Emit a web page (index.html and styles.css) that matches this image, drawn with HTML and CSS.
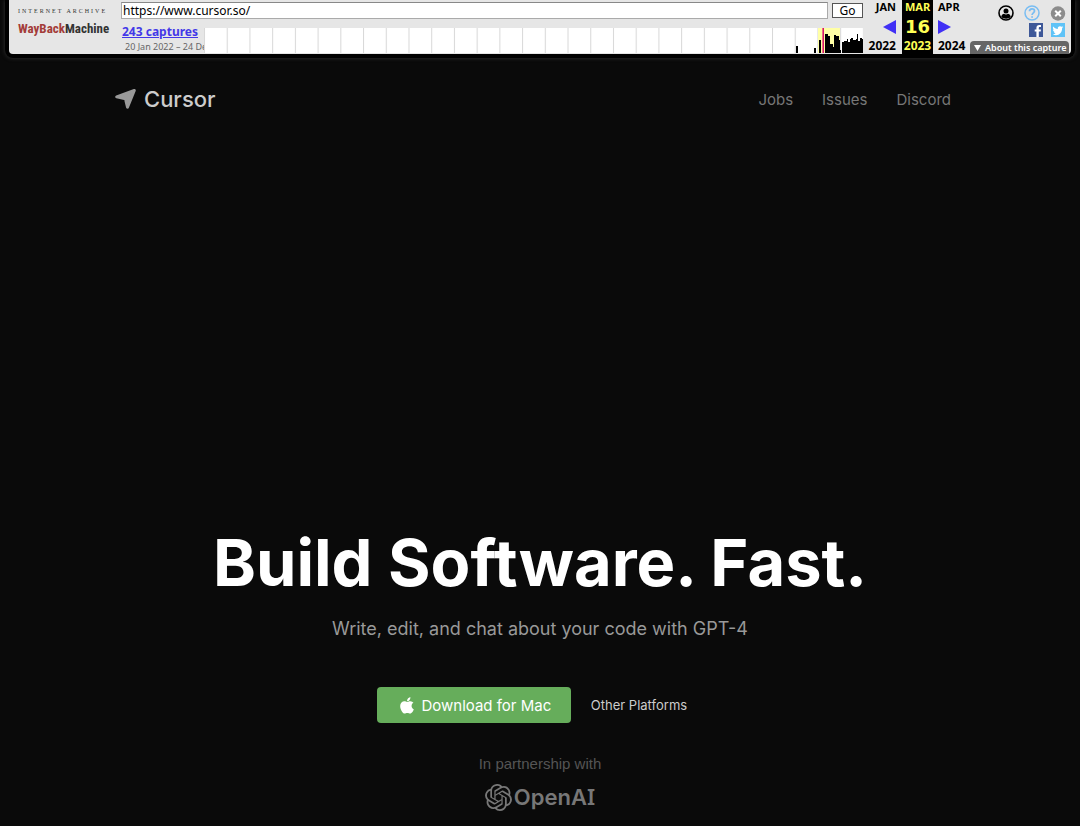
FILE: index.html
```html
<!DOCTYPE html>
<html lang="en">
<head>
<meta charset="utf-8">
<title>Cursor - Build Software. Fast.</title>
<link rel="stylesheet" href="styles.css">
</head>
<body>
<div class="archive-bar">
  <a class="archive-logo" href="#">
    <span class="archive-name">INTERNET ARCHIVE</span>
    <span class="wayback"><span class="wayback-red">WayBack</span>Machine</span>
  </a>
  <div class="archive-main">
    <form class="url-form">
      <input class="url-input" type="text" aria-label="Address" value="https://www.cursor.so/">
      <button class="go" type="button">Go</button>
    </form>
    <div class="history">
      <div class="captures">
        <a class="captures-link" href="#">243 captures</a>
        <span class="captures-range">20 Jan 2022 – 24 Dec 2024</span>
      </div>
      <svg class="spark" viewBox="0 0 659 25" preserveAspectRatio="none" aria-hidden="true">
        <defs>
          <pattern id="years" width="22.72" height="25" patternUnits="userSpaceOnUse">
            <path fill="#fff" d="M0 0h22.72v25H0z"/><path fill="#d8d8d8" d="M0 0h1v25H0z"/>
          </pattern>
        </defs>
        <path fill="url(#years)" d="M0 0h659v25H0z"/>
        <path fill="#ffffa5" d="M614 0h22v25h-22z"/>
        <path d="M592 18h2v7h-2zM610 20h2v5h-2zM615 12h2v13h-2zM621 25V6h3v2h2v8h3v3h1V7h2v1h3v4h1v10h1v3zM638 25V14h2v-1h3v-2h1v3h2v-3h1v-1h2v2h3v-1h1V6h1v7h2v-3h2v1h2v14z"/>
        <path fill="#d6176b" d="M619 0h1v25h-1z"/><path fill="#f06d87" d="M618 0h1v25h-1z"/>
      </svg>
    </div>
  </div>
  <div class="dates">
    <div class="date date-prev"><span>JAN</span><button class="arrow" type="button" aria-label="Previous capture"><svg width="13" height="14" viewBox="0 0 13 14"><path d="M0 7 13 0v14z"/></svg></button><span class="year">2022</span></div>
    <div class="date date-now"><span>MAR</span><strong class="day">16</strong><span class="year">2023</span></div>
    <div class="date date-next"><span>APR</span><button class="arrow" type="button" aria-label="Next capture"><svg width="13" height="14" viewBox="0 0 13 14"><path d="M13 7 0 0v14z"/></svg></button><span class="year">2024</span></div>
  </div>
  <div class="tools">
    <div class="tool-row">
      <button class="tool" type="button" aria-label="Account"><svg width="16" height="16" viewBox="0 0 16 16"><circle cx="8" cy="8" r="7" fill="none" stroke="#000" stroke-width="1.6"/><circle cx="8" cy="6" r="2.5"/><path d="M3.2 12c.4-2.3 1.8-3.2 2.9-3.2 1 .9 2.8.9 3.8 0 1.1 0 2.5.9 2.9 3.2C10.6 14.300 5.600 14.300 3.200 12z"/></svg></button>
      <button class="tool" type="button" aria-label="Help"><svg width="16" height="16" viewBox="0 0 16 16" fill="none" stroke="#79bdf2" stroke-width="1.5"><circle cx="8" cy="8" r="7"/><path d="M5.500 6.300c0-3.300 5-3.300 5-.3 0 1.800-2.400 1.900-2.400 4M8.100 11.300v1.500" stroke-width="1.8"/></svg></button>
      <button class="tool" type="button" aria-label="Close"><svg width="16" height="16" viewBox="0 0 16 16"><circle cx="8" cy="8.5" r="7.2" fill="#8c8c8c"/><path d="m5.200 5.700 5.600 5.600m0-5.600-5.600 5.600" stroke="#fff" stroke-width="2"/></svg></button>
    </div>
    <div class="tool-row social">
      <a class="tool" href="#" aria-label="Facebook"><svg width="14" height="14" viewBox="0 0 14 14"><path fill="#3e5898" d="M0 0h14v14H0z"/><path fill="#fff" d="M7.400 14V8.500H5.700V6.400h1.700V5c0-2 1.100-3 2.800-3H12v2h-1.200c-.8 0-1 .4-1 1.100v1.300H12l-.3 2.100H9.800V14z"/></svg></a>
      <a class="tool" href="#" aria-label="Twitter"><svg width="14" height="14" viewBox="0 0 14 14"><path fill="#5fc3f7" d="M0 0h14v14H0z"/><path fill="#fff" d="M12.300 4.100l-1.200.4.9-1.200-1.400.5A2.300 2.300 0 0 0 6.800 6C4.900 5.900 3.300 5 2.200 3.600c-.6 1.100-.3 2.300.7 3.100l-1-.3c0 1.200.8 2 1.800 2.300H2.700c.3.900 1.100 1.500 2.100 1.600-.9.700-2 1-3.200.9 4.600 2.700 9.600-.4 9.500-5.900z"/></svg></a>
    </div>
    <button class="about" type="button"><svg width="7" height="6" viewBox="0 0 7 6"><path fill="#fff" d="M0 0h7L3.500 6z"/></svg>About this capture</button>
  </div>
</div>

<header class="site-header">
  <a class="brand" href="#">
    <svg width="22" height="20" viewBox="0 0 22 20" aria-hidden="true"><path d="M1.700 7.800 19.300 1.500 12.500 18.200 10.500 9.800z" fill="#999" stroke="#999" stroke-width="3" stroke-linejoin="round"/></svg>
    <span>Cursor</span>
  </a>
  <nav class="nav"><a href="#">Jobs</a><a href="#">Issues</a><a href="#">Discord</a></nav>
</header>

<main class="hero">
  <h1 class="title">Build Software. Fast.</h1>
  <p class="subtitle">Write, edit, and chat about your code with GPT-4</p>
  <div class="actions">
    <button class="download" type="button"><svg width="14" height="17" viewBox="0 0 384 468" aria-hidden="true"><path fill="#fff" d="M318.700 244.700c-.2-36.700 16.400-64.400 50-84.800-18.800-26.900-47.200-41.700-84.700-44.600-35.500-2.800-74.300 20.700-88.500 20.700-15 0-49.400-19.700-76.400-19.700C63.300 117.200 4 160.800 4 249.500c0 26.200 4.800 53.300 14.400 81.200 12.800 36.700 59 126.700 107.200 125.200 25.200-.6 43-17.900 75.800-17.900 31.800 0 48.300 17.900 76.400 17.900 48.600-.7 90.400-82.500 102.600-119.300-65.200-30.700-61.700-90-61.700-91.900zM262.100 80.500c27.300-32.400 24.800-61.900 24-72.500-24.100 1.400-52 16.400-67.900 34.900-17.500 19.800-27.800 44.300-25.600 71.900 26.100 2 49.900-11.400 69.500-34.300z"/></svg>Download for Mac</button>
    <a class="platforms" href="#">Other Platforms</a>
  </div>
  <p class="partner">In partnership with</p>
  <div class="openai">
    <svg width="27" height="27" viewBox="0 0 24 24" aria-hidden="true"><path d="M22.2819 9.8211a5.9847 5.9847 0 0 0-.5157-4.9108 6.0462 6.0462 0 0 0-6.5098-2.9A6.0651 6.0651 0 0 0 4.9807 4.1818a5.9847 5.9847 0 0 0-3.9977 2.9 6.0462 6.0462 0 0 0 .7427 7.0966 5.98 5.98 0 0 0 .511 4.9107 6.051 6.051 0 0 0 6.5146 2.9001A5.9847 5.9847 0 0 0 13.2599 24a6.0557 6.0557 0 0 0 5.7718-4.2058 5.9894 5.9894 0 0 0 3.9977-2.9001 6.0557 6.0557 0 0 0-.7475-7.0729zm-9.022 12.6081a4.4755 4.4755 0 0 1-2.8764-1.0408l.1419-.0804 4.7783-2.7582a.7948.7948 0 0 0 .3927-.6813v-6.7369l2.02 1.1686a.071.071 0 0 1 .038.052v5.5826a4.504 4.504 0 0 1-4.4945 4.4944zm-9.6607-4.1254a4.4708 4.4708 0 0 1-.5346-3.0137l.142.0852 4.783 2.7582a.7712.7712 0 0 0 .7806 0l5.8428-3.3685v2.3324a.0804.0804 0 0 1-.0332.0615L9.74 19.9502a4.4992 4.4992 0 0 1-6.1408-1.6464zM2.3408 7.8956a4.485 4.485 0 0 1 2.3655-1.9728V11.6a.7664.7664 0 0 0 .3879.6765l5.8144 3.3543-2.0201 1.1685a.0757.0757 0 0 1-.071 0l-4.8303-2.7865A4.504 4.504 0 0 1 2.3408 7.872zm16.5963 3.8558L13.1038 8.364 15.1192 7.2a.0757.0757 0 0 1 .071 0l4.8303 2.7913a4.4944 4.4944 0 0 1-.6765 8.1042v-5.6772a.79.79 0 0 0-.407-.667zm2.0107-3.0231l-.142-.0852-4.7735-2.7818a.7759.7759 0 0 0-.7854 0L9.409 9.2297V6.8974a.0662.0662 0 0 1 .0284-.0615l4.8303-2.7866a4.4992 4.4992 0 0 1 6.6802 4.66zM8.3065 12.863l-2.02-1.1638a.0804.0804 0 0 1-.038-.0567V6.0742a4.4992 4.4992 0 0 1 7.3757-3.4537l-.142.0805L8.704 5.459a.7948.7948 0 0 0-.3927.6813zm1.0976-2.3654l2.602-1.4998 2.6069 1.4998v2.9994l-2.5974 1.4997-2.6067-1.4997Z"/></svg>
    <span>OpenA<span class="serif-i">I</span></span>
  </div>
</main>
</body>
</html>
```
FILE: styles.css
```css
* { box-sizing: border-box; }
body { margin: 0; min-height: 100vh; background: #0a0a0a; font-family: Inter, sans-serif; overflow: hidden; }
a { color: inherit; text-decoration: none; }
button { padding: 0; border: 0; background: none; font: inherit; color: inherit; cursor: pointer; }
svg { display: block; flex: none; }

.archive-bar {
  display: flex; height: 58px; margin: 0 5px; padding-left: 8px;
  border: 4px solid #000; border-top: 0; border-radius: 0 0 8px 8px;
  background: #e6e6e6; box-shadow: 0 0 4px #333;
  font-family: "Noto Sans", "Open Sans", sans-serif; font-size: 11px; color: #000;
}
.archive-logo { display: flex; flex-direction: column; width: 104px; padding: 6px 0 0 1px; white-space: nowrap; }
.archive-name { font: 6px/10px "Liberation Serif", serif; letter-spacing: 2px; color: #333; }
.wayback { font: bold 13px/26px "Liberation Sans Narrow", "Roboto Condensed", "DejaVu Sans Condensed", sans-serif; color: #333; }
.wayback-red { color: #a33c39; }
.archive-main { flex: 1; min-width: 0; }
.url-form { display: flex; align-items: center; gap: 4px; height: 20px; }
.url-input {
  flex: 1; min-width: 0; height: 17px; padding: 0 1px; border: 1px solid #aaa; border-top-color: #888;
  background: #fff; font: 12px/14px "Noto Sans", sans-serif; color: #000;
}
.go { width: 31px; height: 15px; border: 1px solid #555; background: #fff; font-size: 12px; line-height: 13px; }
.history { display: flex; height: 34px; padding-top: 8px; }
.captures { width: 83px; overflow: hidden; white-space: nowrap; display: flex; flex-direction: column; margin-top: -4px; padding-left: 1px; }
.captures-link { font-size: 12px; line-height: 16px; font-weight: 700; color: #4338e8; text-decoration: underline; }
.captures-range { padding-left: 3px; font-size: 9px; line-height: 13px; color: #666; }
.spark { flex: 1; min-width: 0; height: 25px; }

.dates { display: flex; margin-left: 4px; font-weight: 700; }
.date { display: flex; flex-direction: column; justify-content: space-between; height: 53px; line-height: 14px; }
.date-prev { width: 35px; align-items: flex-end; padding-right: 6px; }
.date-now { width: 31px; height: 54px; align-items: center; background: #000; color: #ff5; padding-bottom: 1px; }
.date-next { width: 36px; padding-left: 5px; align-items: flex-start; }
.year { font-size: 12px; }
.day { font: bold 18px/22px "DejaVu Sans", sans-serif; }
.arrow svg { fill: #4130f5; }

.tools { display: flex; flex-direction: column; align-items: flex-end; width: 102px; }
.tool-row { display: flex; gap: 10px; height: 23px; padding: 3px 5px 0 0; }
.social { gap: 8px; height: 18px; padding: 0 6px 0 0; }
.about {
  display: flex; align-items: center; gap: 4px; width: 99px; height: 13px; margin-right: 2px; padding-left: 4px;
  border-radius: 4px 4px 0 0; background: #666; color: #fff; font-size: 9px; font-weight: 600; line-height: 13px; white-space: nowrap;
}

.site-header { display: flex; justify-content: space-between; align-items: center; height: 82px; padding: 0 129px 0 115px; }
.brand { display: flex; align-items: center; gap: 7px; font-size: 22px; font-weight: 500; line-height: 28px; color: #ccc; }
.nav { display: flex; gap: 29px; padding-top: 1px; font-size: 15px; line-height: 20px; color: #777; }

.hero { display: flex; flex-direction: column; align-items: center; padding-top: 383px; }
.title { margin: 0; font-size: 65px; line-height: 80px; font-weight: 700; color: #fff; white-space: nowrap; }
.subtitle { margin: 13px 0 0; font-size: 18px; line-height: 26px; color: #999; }
.actions { display: flex; align-items: center; gap: 20px; margin: 45px 0 0 -16px; }
.download {
  display: flex; align-items: center; justify-content: center; gap: 7px; width: 194px; height: 36px; padding-left: 4px;
  border-radius: 4px; background: #66ad5b; color: #fff; font-size: 15px;
}
.platforms { font-size: 13px; line-height: 20px; color: #ccc; }
.partner { margin: 31px 0 0; font: 15px/20px "Liberation Sans", sans-serif; color: #555; }
.openai { display: flex; align-items: center; gap: 2px; margin-top: 9px; font-size: 22px; line-height: 27px; font-weight: 600; color: #777; }
.openai svg { fill: #777; }
.serif-i { font-family: "Noto Sans", sans-serif; }
```
